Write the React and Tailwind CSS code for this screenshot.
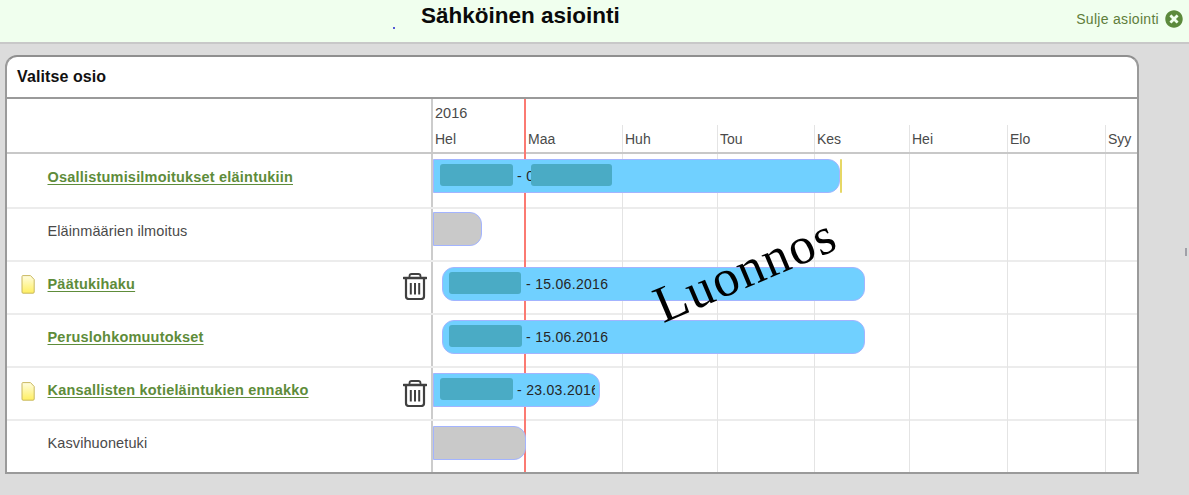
import React from "react";
import { FaTimesCircle } from "react-icons/fa";

const months = [
  ["Hel", 92], ["Maa", 97], ["Huh", 95], ["Tou", 97], ["Kes", 95], ["Hei", 98], ["Elo", 98], ["Syy", 34],
];

function Trash() {
  return (
    <svg width="24" height="27" viewBox="0 0 24 27" fill="none" stroke="#404040">
      <path d="M6.5 4.5 V3.2 Q6.5 1 8.7 1 H15.3 Q17.5 1 17.5 3.2 V4.5" strokeWidth="1.8" />
      <path d="M.6 5 H23.4" strokeWidth="2.4" strokeLinecap="round" />
      <path d="M3 6 V23.2 Q3 26 5.8 26 H18.2 Q21 26 21 23.2 V6" strokeWidth="2.2" />
      <path d="M7.8 10 V21.5 M12 10 V21.5 M16.2 10 V21.5" strokeWidth="2" />
    </svg>
  );
}

function Note() {
  return (
    <svg width="14" height="19" viewBox="0 0 14 19">
      <defs>
        <linearGradient id="noteFill" x1="0" y1="0" x2="0" y2="1">
          <stop offset="0" stopColor="#fffde0" />
          <stop offset="1" stopColor="#ffef60" />
        </linearGradient>
      </defs>
      <path d="M1 1.5 Q1 .6 2 .6 H9.5 L13.2 4.5 V17 Q13.2 18.2 12 18.2 H2 Q1 18.2 1 17 Z" fill="url(#noteFill)" stroke="#c9b860" />
    </svg>
  );
}

function Blur({ className }) {
  return <span className={`absolute top-[4px] h-[22px] rounded-[3px] bg-[#4aabc5] ${className}`} />;
}

function Row({ label, link, note, trash, first, tight, children }) {
  return (
    <div className={`flex border-[#ececec] ${first ? "h-[52.5px]" : "h-[53.2px] border-t-2"}`}>
      <div className="flex w-[424px] shrink-0 items-center pl-[14px] pr-[4px]">
        <span className="mb-[5px] flex w-[26.5px] shrink-0">{note && <Note />}</span>
        {link ? (
          <a className="mb-[5px] text-[14.5px] font-semibold tracking-[0.2px] text-[#5e8c3a] underline underline-offset-2">{label}</a>
        ) : (
          <span className="mb-[5px] text-[14.5px] tracking-[0.1px] text-[#4a4a4a]">{label}</span>
        )}
        {trash && <span className="mb-[1px] ml-auto flex"><Trash /></span>}
      </div>
      <div className={`relative min-w-0 flex-1 overflow-hidden border-l-2 border-[#cccccc] ${tight ? "pt-[3px]" : "pt-[5px]"}`}>{children}</div>
    </div>
  );
}

function Bar({ gray, left, width, roundLeft, children }) {
  return (
    <div
      className={`relative z-10 h-[34px] overflow-hidden border border-[#a3b4ff] ${gray ? "bg-[#c9c9c9]" : "bg-[#70d0ff]"} ${roundLeft ? "rounded-[12px]" : "rounded-r-[12px]"}`}
      style={{ marginLeft: left, width }}
    >
      {children}
    </div>
  );
}

function BarDate({ left, clip, children }) {
  return (
    <span className="absolute top-[6px] overflow-hidden whitespace-nowrap text-[14px] tracking-[0.3px] text-[#262626]" style={{ left, maxWidth: clip }}>{children}</span>
  );
}

export default function App() {
  return (
    <div className="relative h-[495px] w-[1189px] overflow-hidden bg-[#dcdcdc] font-['Liberation_Sans',Arial,sans-serif]">
      <header className="relative flex h-[44px] items-start border-b-2 border-[#c8c8c8] bg-[#f0ffee]">
        <h1 className="ml-[421px] mt-[2px] text-[22.5px] font-bold leading-[28px] text-[#0a0a0a]">Sähköinen asiointi</h1>
        <span className="absolute left-[393px] top-[27px] size-[1.5px] rounded-full bg-[#2222cc]" />
        <div className="ml-auto mr-[6px] mt-[10px] flex items-center gap-[6px] text-[14px] leading-[16px] tracking-[0.3px] text-[#5e7d3a]">
          Sulje asiointi
          <FaTimesCircle className="size-[18px] text-[#5c8a3c]" />
        </div>
      </header>

      <main className="ml-[5px] mt-[11px] w-[1134px] overflow-hidden rounded-t-[12px] border-2 border-[#9a9a9a] border-t-[#8f8f8f] bg-white">
        <div className="flex h-[42px] items-center border-b-2 border-[#9a9a9a] pl-[10px] text-[16px] font-bold tracking-[0.1px] text-[#111]">Valitse osio</div>

        <div className="relative">
          {/* Header of the timeline */}
          <div className="flex h-[55px] border-b-2 border-[#c8c8c8]">
            <div className="w-[424px] shrink-0" />
            <div className="flex-1 border-l-2 border-[#cccccc]">
              <div className="h-[26px] pl-[2px] pt-[5px] text-[14.5px] leading-[18px] text-[#4a4a4a]">2016</div>
              <div className="flex h-[27px]">
                {months.map(([m, w]) => (
                  <div key={m} className="shrink-0 border-l border-[#e4e4e4] pl-[2px] pt-[5px] text-[14px] leading-[18px] text-[#4a4a4a] first:border-l-0" style={{ width: w }}>{m}</div>
                ))}
              </div>
            </div>
          </div>

          <div className="relative">
            {/* Month lines behind the bars */}
            <div className="pointer-events-none absolute inset-y-0 left-[426px] right-0 flex">
              {months.map(([m, w]) => (
                <div key={m} className="shrink-0 border-l border-[#e4e4e4] first:border-l-0" style={{ width: w }} />
              ))}
            </div>

            <Row label="Osallistumisilmoitukset eläintukiin" link first>
              <Bar left={0} width={407}>
                <Blur className="left-[6px] w-[73px]" />
                <BarDate left={83}>- 0</BarDate>
                <Blur className="left-[97px] w-[81px]" />
              </Bar>
              <span className="absolute left-[407px] top-[5px] z-20 h-[34px] w-[2px] rounded-[1px] bg-[#e6d765]" />
            </Row>
            <Row label="Eläinmäärien ilmoitus" tight>
              <Bar gray left={0} width={49} />
            </Row>
            <Row label="Päätukihaku" link note trash>
              <Bar left={9} width={423} roundLeft>
                <Blur className="left-[6px] w-[72px]" />
                <BarDate left={83}>- 15.06.2016</BarDate>
              </Bar>
            </Row>
            <Row label="Peruslohkomuutokset" link>
              <Bar left={9} width={423} roundLeft>
                <Blur className="left-[6px] w-[73px]" />
                <BarDate left={83}>- 15.06.2016</BarDate>
              </Bar>
            </Row>
            <Row label="Kansallisten kotieläintukien ennakko" link note trash>
              <Bar left={0} width={167}>
                <Blur className="left-[6px] w-[73px]" />
                <BarDate left={83} clip={78}>- 23.03.2016</BarDate>
              </Bar>
            </Row>
            <Row label="Kasvihuonetuki">
              <Bar gray left={0} width={93} />
            </Row>
          </div>
          <span className="absolute bottom-0 left-[517px] top-0 z-0 w-[2px] bg-[#fb7a72]" />
        </div>
      </main>

      <span className="absolute left-[1185px] top-[248px] h-[8px] w-[1.5px] bg-[#a0a0a8]" />

      <div className="absolute left-[649px] top-[240px] z-30 origin-center -rotate-[23deg] font-['Liberation_Serif',serif] text-[52px] leading-[60px] tracking-[1.5px] text-black">
        Luonnos
      </div>
    </div>
  );
}
